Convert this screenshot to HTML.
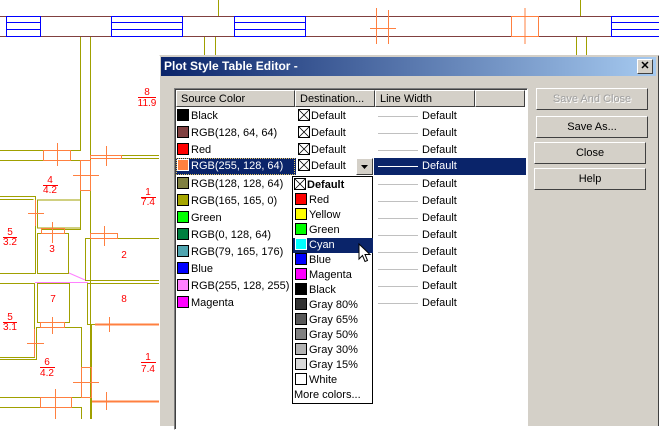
<!DOCTYPE html>
<html><head><style>
body{margin:0;width:659px;height:419px;overflow:hidden;background:#fff;font-family:"Liberation Sans",sans-serif;font-size:11px;position:relative}
.a{position:absolute}
.dlg{left:159px;top:55px;width:498px;height:370px;background:#d4d0c8;border-left:1px solid #fff;border-top:1px solid #d4d0c8;border-right:2px solid #404040}
.title{left:161px;top:57px;width:495px;height:19px;background:linear-gradient(90deg,#0a246a,#a6caf0);color:#fff;font-weight:bold;font-size:12px;line-height:19px}
.title span{padding-left:3px}
.x{left:637px;top:59px;width:14px;height:13px;background:#d4d0c8;border:1px solid;border-color:#fff #404040 #404040 #fff;font-size:11px;line-height:13px;text-align:center;color:#000;font-weight:bold}
.list{left:174px;top:88px;width:352px;height:340px;background:#fff;border:1px solid;border-color:#808080 #fff #fff #808080;box-shadow:inset 1px 1px 0 #404040}
.hd{top:90px;background:#d4d0c8;border:1px solid;border-color:#fff #404040 #404040 #fff;line-height:16px;padding-left:4px;box-sizing:border-box;height:17px}
.row{left:176px;height:17px;line-height:17px;width:349px;top:1px}
.sw{display:inline-block;width:10px;height:10px;border:1px solid #000;vertical-align:-2px;margin:0 2px 0 1px}
.cb{display:inline-block;width:12px;height:12px;vertical-align:-2px;margin-right:1px}
.lw{left:378px;width:40px;border-top:1px solid #c0c0c0}
.btn{left:534px;width:112px;height:22px;background:#d4d0c8;border:1px solid;border-color:#fff #404040 #404040 #fff;box-sizing:border-box;text-align:center;line-height:20px;font-size:11px}
.dd{left:292px;top:176px;width:81px;height:228px;background:#fff;border:1px solid #000;box-sizing:border-box}
.it{left:0;width:79px;height:15px;line-height:15px;padding-left:1px}
</style></head><body>
<svg class="a" style="left:0;top:0" width="659" height="419">
<g stroke="#804040" stroke-width="1"><line x1="0" y1="16.5" x2="659" y2="16.5"/><line x1="0" y1="36.5" x2="659" y2="36.5"/></g>
<g stroke="#0000ff" fill="none">
<rect x="6.5" y="16.5" width="34" height="20"/><line x1="6" y1="22.5" x2="40" y2="22.5"/><line x1="6" y1="29.5" x2="40" y2="29.5"/>
<rect x="111.5" y="16.5" width="71" height="20"/><line x1="111" y1="22.5" x2="182" y2="22.5"/><line x1="111" y1="29.5" x2="182" y2="29.5"/>
<rect x="234.5" y="16.5" width="71" height="20"/><line x1="234" y1="22.5" x2="305" y2="22.5"/><line x1="234" y1="29.5" x2="305" y2="29.5"/>
<rect x="611.5" y="16.5" width="60" height="20"/><line x1="611" y1="22.5" x2="659" y2="22.5"/><line x1="611" y1="29.5" x2="659" y2="29.5"/>
</g>
<g stroke="#a0a000" fill="none">
<line x1="218.5" y1="0" x2="218.5" y2="16"/><line x1="580.5" y1="0" x2="580.5" y2="16"/>
<line x1="576.5" y1="37" x2="576.5" y2="55"/><line x1="586.5" y1="37" x2="586.5" y2="55"/>
<line x1="204.5" y1="37" x2="204.5" y2="55"/><line x1="215.5" y1="37" x2="215.5" y2="55"/>
<polyline points="0,150.5 80.5,150.5 80.5,37"/>
<line x1="90.5" y1="37" x2="90.5" y2="419"/>
<polyline points="0,160.5 80.5,160.5 80.5,229.5 41,229.5"/>
<line x1="90" y1="155.5" x2="160" y2="155.5"/><line x1="90" y1="158.5" x2="160" y2="158.5"/>
<polyline points="0,196.5 35.5,196.5 35.5,273.5 0,273.5"/>
<polyline points="0,199.5 33.5,199.5"/>
<rect x="37.5" y="200" width="43" height="28"/>
<rect x="37.5" y="233.5" width="31" height="40"/>
<polyline points="160,238.5 85.5,238.5 85.5,280.5 160,280.5"/>
<rect x="37.5" y="283.5" width="32" height="39"/>
<polyline points="0,283.5 34.5,283.5 34.5,357.5 0,357.5"/>
<polyline points="0,359.5 36.5,359.5 36.5,327.5 81.5,327.5 81.5,397.5 0,397.5"/>
<polyline points="160,283.5 87.5,283.5 87.5,324.5 160,324.5"/>
<line x1="91.5" y1="324" x2="91.5" y2="419"/>
<polyline points="0,407.5 81.5,407.5 81.5,419"/>
</g>
<g stroke="#ff8040" fill="none">
<rect x="511.5" y="16.5" width="27" height="20"/><line x1="525" y1="8" x2="525" y2="44"/>
<line x1="376.5" y1="8" x2="376.5" y2="44"/><line x1="388.5" y1="10" x2="388.5" y2="44"/><line x1="370" y1="28.5" x2="396" y2="28.5"/>
<rect x="43.5" y="150.5" width="27" height="10"/><line x1="57.5" y1="143" x2="57.5" y2="166"/>
<rect x="80.5" y="160.5" width="10" height="30"/><line x1="73" y1="175.5" x2="99" y2="175.5"/>
<rect x="90.5" y="155.5" width="31" height="3"/><line x1="106.5" y1="146" x2="106.5" y2="166"/>
<line x1="28" y1="213.5" x2="44" y2="213.5"/><line x1="35.5" y1="200" x2="35.5" y2="226"/>
<rect x="41.5" y="228.5" width="23" height="5"/><line x1="52.5" y1="222" x2="52.5" y2="243"/>
<rect x="90.5" y="233.5" width="27" height="5"/><line x1="104.5" y1="226" x2="104.5" y2="246"/>
<rect x="40.5" y="322.5" width="24" height="5"/><line x1="52.5" y1="317" x2="52.5" y2="334"/>
<line x1="34.5" y1="329" x2="34.5" y2="357"/><line x1="27" y1="343.5" x2="44" y2="343.5"/>
<rect x="81.5" y="367.5" width="10" height="30"/><line x1="73" y1="382.5" x2="99" y2="382.5"/>
<rect x="40.5" y="397.5" width="31" height="10"/><line x1="55.5" y1="389" x2="55.5" y2="419"/>
<line x1="95" y1="324.5" x2="160" y2="324.5" stroke-width="2"/><line x1="109.5" y1="317" x2="109.5" y2="332"/>
<line x1="92" y1="401.5" x2="160" y2="401.5" stroke-width="2"/><line x1="106.5" y1="392" x2="106.5" y2="410"/>
</g>
<line x1="69" y1="273" x2="85" y2="280" stroke="#ff80ff"/><line x1="35" y1="282.5" x2="88" y2="282.5" stroke="#ff80ff"/>
<g fill="#ff0000" font-family="Liberation Sans" font-size="10" text-anchor="middle">
<text x="147" y="95">8</text><line x1="138" y1="97.5" x2="156" y2="97.5" stroke="#f00"/><text x="147" y="106">11.9</text>
<text x="50" y="183">4</text><line x1="43" y1="185.5" x2="58" y2="185.5" stroke="#f00"/><text x="50" y="193">4.2</text>
<text x="148" y="195">1</text><line x1="141" y1="197.5" x2="156" y2="197.5" stroke="#f00"/><text x="148" y="205">7.4</text>
<text x="10" y="235">5</text><line x1="3" y1="237.5" x2="17" y2="237.5" stroke="#f00"/><text x="10" y="245">3.2</text>
<text x="52" y="252">3</text><text x="124" y="258">2</text><text x="53" y="302">7</text><text x="124" y="302">8</text>
<text x="10" y="320">5</text><line x1="3" y1="322.5" x2="17" y2="322.5" stroke="#f00"/><text x="10" y="330">3.1</text>
<text x="47" y="365">6</text><line x1="40" y1="367.5" x2="55" y2="367.5" stroke="#f00"/><text x="47" y="376">4.2</text>
<text x="148" y="360">1</text><line x1="141" y1="362.5" x2="156" y2="362.5" stroke="#f00"/><text x="148" y="372">7.4</text>
</g>
</svg>
<div class="a dlg"></div>
<div class="a title"><span>Plot Style Table Editor -</span></div>
<div class="a x">✕</div>
<div class="a list"></div>
<div class="a hd" style="left:176px;width:119px">Source Color</div>
<div class="a hd" style="left:295px;width:80px">Destination...</div>
<div class="a hd" style="left:375px;width:100px">Line Width</div>
<div class="a hd" style="left:475px;width:50px"></div>
<div class="a" style="left:176px;top:158px;width:350px;height:17px;background:#0a246a"></div>
<div class="a" style="left:176px;top:158px;width:117px;height:15px;border:1px dotted #e0c060"></div>

<div class="a row" style="top:108px"><span class="sw" style="background:#000"></span>Black</div>
<div class="a row" style="top:125px"><span class="sw" style="background:#804040"></span>RGB(128, 64, 64)</div>
<div class="a row" style="top:142px"><span class="sw" style="background:#f00"></span>Red</div>
<div class="a row" style="top:158px;color:#fff"><span class="sw" style="background:#ff8040;border-color:#fff"></span>RGB(255, 128, 64)</div>
<div class="a row" style="top:176px"><span class="sw" style="background:#808040"></span>RGB(128, 128, 64)</div>
<div class="a row" style="top:193px"><span class="sw" style="background:#a5a500"></span>RGB(165, 165, 0)</div>
<div class="a row" style="top:210px"><span class="sw" style="background:#0f0"></span>Green</div>
<div class="a row" style="top:227px"><span class="sw" style="background:#008040"></span>RGB(0, 128, 64)</div>
<div class="a row" style="top:244px"><span class="sw" style="background:#4fa5b0"></span>RGB(79, 165, 176)</div>
<div class="a row" style="top:261px"><span class="sw" style="background:#00f"></span>Blue</div>
<div class="a row" style="top:278px"><span class="sw" style="background:#ff80ff"></span>RGB(255, 128, 255)</div>
<div class="a row" style="top:295px"><span class="sw" style="background:#f0f"></span>Magenta</div>

<div class="a row" style="top:108px;left:298px;width:70px"><svg class="cb" viewBox="0 0 12 12"><rect x=".5" y=".5" width="11" height="11" fill="#fff" stroke="#000"/><path d="M1 1L11 11M11 1L1 11" stroke="#000" stroke-width=".8"/></svg>Default</div>
<div class="a row" style="top:125px;left:298px;width:70px"><svg class="cb" viewBox="0 0 12 12"><rect x=".5" y=".5" width="11" height="11" fill="#fff" stroke="#000"/><path d="M1 1L11 11M11 1L1 11" stroke="#000" stroke-width=".8"/></svg>Default</div>
<div class="a row" style="top:142px;left:298px;width:70px"><svg class="cb" viewBox="0 0 12 12"><rect x=".5" y=".5" width="11" height="11" fill="#fff" stroke="#000"/><path d="M1 1L11 11M11 1L1 11" stroke="#000" stroke-width=".8"/></svg>Default</div>
<div class="a row" style="top:158px;left:296px;width:78px;background:#fff;padding-left:2px;box-sizing:border-box"><svg class="cb" viewBox="0 0 12 12"><rect x=".5" y=".5" width="11" height="11" fill="#fff" stroke="#000"/><path d="M1 1L11 11M11 1L1 11" stroke="#000" stroke-width=".8"/></svg>Default</div>
<div class="a" style="left:356px;top:158px;width:15px;height:15px;background:#d4d0c8;border:1px solid;border-color:#fff #404040 #404040 #fff"><svg width="15" height="15" style="display:block"><path d="M4 6h7l-3.5 4z" fill="#000"/></svg></div>

<div class="a lw" style="top:116px"></div><div class="a row" style="top:108px;left:422px;width:50px">Default</div>
<div class="a lw" style="top:133px"></div><div class="a row" style="top:125px;left:422px;width:50px">Default</div>
<div class="a lw" style="top:150px"></div><div class="a row" style="top:142px;left:422px;width:50px">Default</div>
<div class="a lw" style="top:166px;border-color:#fff"></div><div class="a row" style="top:158px;left:422px;width:50px;color:#fff">Default</div>
<div class="a lw" style="top:184px"></div><div class="a row" style="top:176px;left:422px;width:50px">Default</div>
<div class="a lw" style="top:201px"></div><div class="a row" style="top:193px;left:422px;width:50px">Default</div>
<div class="a lw" style="top:218px"></div><div class="a row" style="top:210px;left:422px;width:50px">Default</div>
<div class="a lw" style="top:235px"></div><div class="a row" style="top:227px;left:422px;width:50px">Default</div>
<div class="a lw" style="top:252px"></div><div class="a row" style="top:244px;left:422px;width:50px">Default</div>
<div class="a lw" style="top:269px"></div><div class="a row" style="top:261px;left:422px;width:50px">Default</div>
<div class="a lw" style="top:286px"></div><div class="a row" style="top:278px;left:422px;width:50px">Default</div>
<div class="a lw" style="top:303px"></div><div class="a row" style="top:295px;left:422px;width:50px">Default</div>

<div class="a dd">
<div class="a it" style="top:1px;font-weight:bold"><svg class="cb" viewBox="0 0 12 12"><rect x=".5" y=".5" width="11" height="11" fill="#fff" stroke="#000"/><path d="M1 1L11 11M11 1L1 11" stroke="#000" stroke-width=".8"/></svg>Default</div>
<div class="a it" style="top:16px"><span class="sw" style="background:#f00"></span>Red</div>
<div class="a it" style="top:31px"><span class="sw" style="background:#ff0"></span>Yellow</div>
<div class="a it" style="top:46px"><span class="sw" style="background:#0f0"></span>Green</div>
<div class="a it" style="top:61px;background:#0a246a;color:#fff"><span class="sw" style="background:#0ff;border-color:#fff"></span>Cyan</div>
<div class="a it" style="top:76px"><span class="sw" style="background:#00f"></span>Blue</div>
<div class="a it" style="top:91px"><span class="sw" style="background:#f0f"></span>Magenta</div>
<div class="a it" style="top:106px"><span class="sw" style="background:#000"></span>Black</div>
<div class="a it" style="top:121px"><span class="sw" style="background:#333"></span>Gray 80%</div>
<div class="a it" style="top:136px"><span class="sw" style="background:#595959"></span>Gray 65%</div>
<div class="a it" style="top:151px"><span class="sw" style="background:#808080"></span>Gray 50%</div>
<div class="a it" style="top:166px"><span class="sw" style="background:#b3b3b3"></span>Gray 30%</div>
<div class="a it" style="top:181px"><span class="sw" style="background:#d9d9d9"></span>Gray 15%</div>
<div class="a it" style="top:196px"><span class="sw" style="background:#fff"></span>White</div>
<div class="a it" style="top:211px">More colors...</div>
</div>
<svg class="a" style="left:358px;top:243px" width="14" height="22"><path d="M1,1 L1,16 L4.5,12.5 L7,18.5 L9.5,17.5 L7,11.5 L12,11.5 Z" fill="#fff" stroke="#000"/></svg>

<div class="a btn" style="top:88px;left:536px;color:#a0a0a0;text-shadow:1px 1px 0 #fff">Save And Close</div>
<div class="a btn" style="top:116px;left:536px">Save As...</div>
<div class="a btn" style="top:142px">Close</div>
<div class="a btn" style="top:168px">Help</div>
</body></html>
